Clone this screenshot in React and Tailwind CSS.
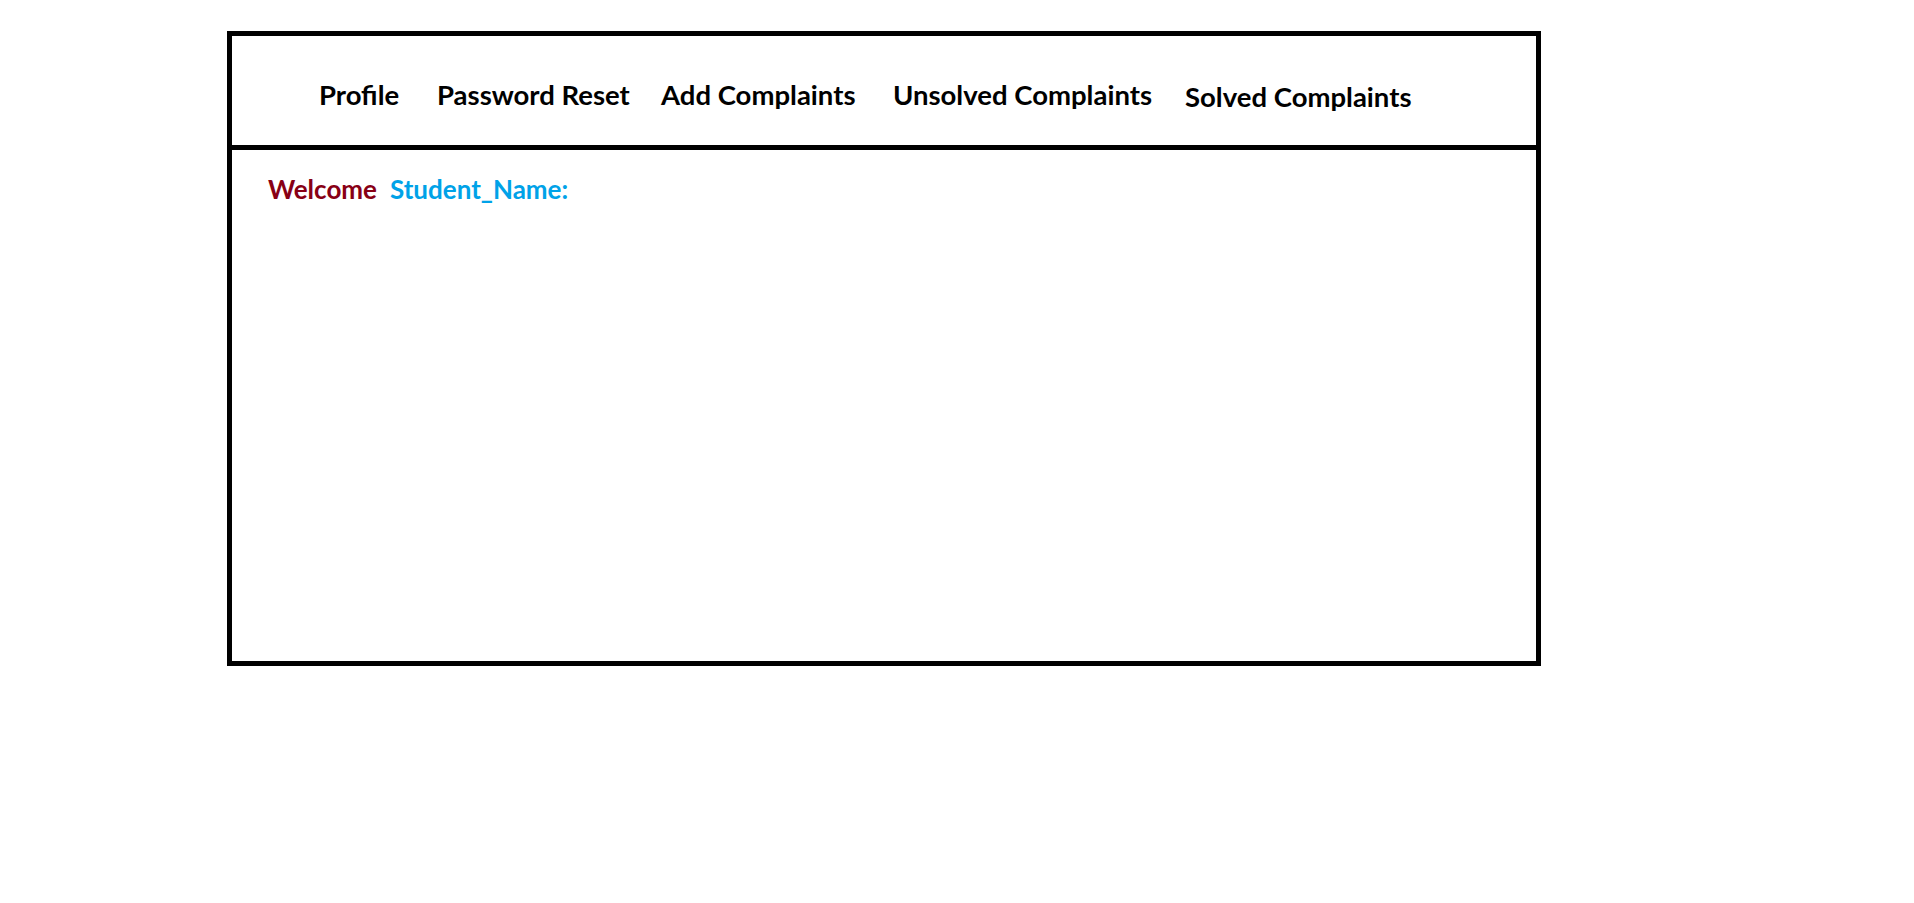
export default function App() {
  const items = [
    { label: "Profile", w: "w-[118px]", extra: "" },
    { label: "Password Reset", w: "w-[224px]", extra: "" },
    { label: "Add Complaints", w: "w-[232px]", extra: "" },
    { label: "Unsolved Complaints", w: "w-[292px]", extra: "" },
    { label: "Solved Complaints", w: "w-[260px]", extra: "pt-[2px]" },
  ];
  return (
    <div className="w-[1914px] h-[903px] bg-white overflow-hidden" style={{ fontFamily: "Lato, 'Open Sans', sans-serif" }}>
      <div className="ml-[227px] mt-[31px] w-[1314px] h-[635px] border-[5px] border-black flex flex-col">
        <div className="h-[114px] border-b-[5px] border-black flex pl-[87px] pt-[45px]">
          {items.map((it) => (
            <div key={it.label} className={`${it.w} ${it.extra} shrink-0 text-[27.5px] leading-none font-bold text-black whitespace-nowrap`}>
              {it.label}
            </div>
          ))}
        </div>
        <div className="flex pl-[36px] pt-[26px] text-[26px] leading-none font-bold whitespace-nowrap">
          <span className="w-[122px] text-[#880015]">Welcome</span>
          <span className="text-[#00a2e8]">Student_Name:</span>
        </div>
      </div>
    </div>
  );
}
